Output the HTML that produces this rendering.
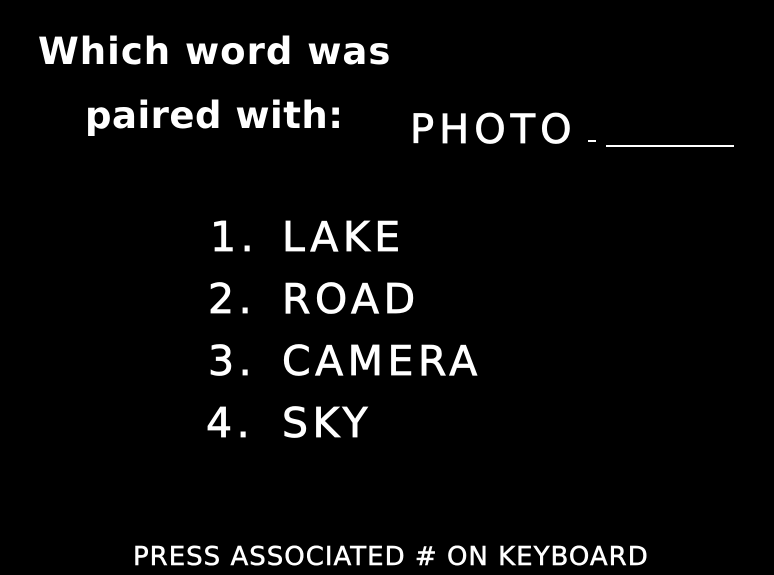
<!DOCTYPE html>
<html><head><meta charset="utf-8"><style>
html,body{margin:0;padding:0;background:#000;}
body{width:774px;height:575px;position:relative;overflow:hidden;color:#fff;font-family:"DejaVu Sans","Liberation Sans",sans-serif;}
.t{position:absolute;white-space:nowrap;line-height:1;-webkit-text-stroke:0.8px #fff;}
.l{font-size:41px;letter-spacing:4.5px;}
</style></head><body>
<div class="t" style="left:38px;top:33px;font-size:37px;font-weight:bold;letter-spacing:1px;-webkit-text-stroke:0;">Which word was</div>
<div class="t" style="left:85px;top:97px;font-size:37px;font-weight:bold;letter-spacing:0.5px;-webkit-text-stroke:0;">paired with:</div>
<div class="t" style="left:410px;top:110px;font-size:40px;letter-spacing:5px;">PHOTO</div>
<div class="t" style="left:588px;top:140px;width:8px;height:2px;background:#fff;"></div>
<div class="t" style="left:606px;top:145px;width:128px;height:2px;background:#fff;"></div>
<div class="t l" style="left:210px;top:217px;">1.</div>
<div class="t l" style="left:282px;top:217px;">LAKE</div>
<div class="t l" style="left:208px;top:279px;">2.</div>
<div class="t l" style="left:282px;top:279px;">ROAD</div>
<div class="t l" style="left:208px;top:341px;">3.</div>
<div class="t l" style="left:282px;top:341px;">CAMERA</div>
<div class="t l" style="left:206px;top:403px;">4.</div>
<div class="t l" style="left:282px;top:403px;">SKY</div>
<div class="t" style="left:133px;top:544px;font-size:26px;letter-spacing:1px;-webkit-text-stroke:0.5px #fff;">PRESS ASSOCIATED # ON KEYBOARD</div>
</body></html>
